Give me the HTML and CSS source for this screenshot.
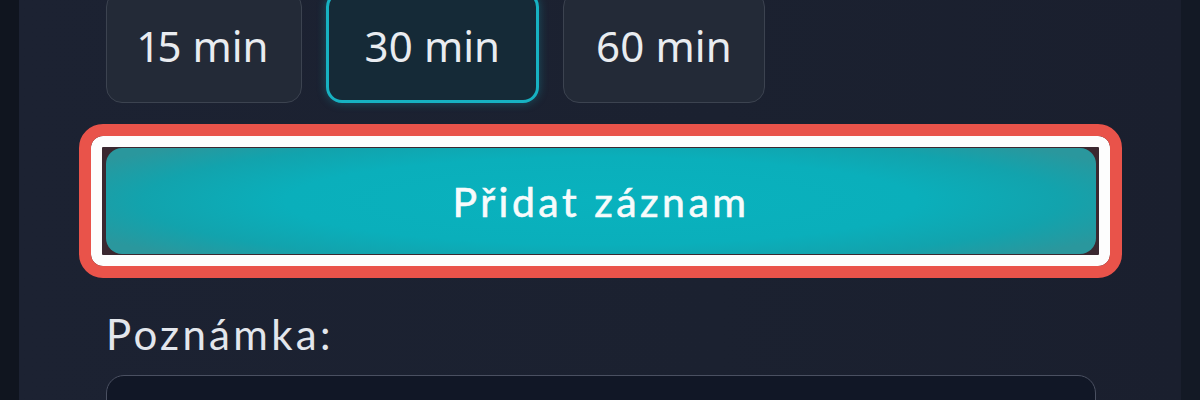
FILE: index.html
```html
<!DOCTYPE html>
<html lang="cs">
<head>
<meta charset="utf-8">
<title>Přidat záznam</title>
<link rel="stylesheet" href="styles.css">
</head>
<body>
<div class="page">
  <div class="edge edge-left"></div>
  <main class="card">
    <div class="durations">
      <button class="dur">15 min</button>
      <button class="dur dur-active">30 min</button>
      <button class="dur">60 min</button>
    </div>
    <div class="highlight">
      <button class="primary">Přidat záznam</button>
    </div>
    <label class="note-label" for="note">Poznámka:</label>
    <textarea id="note" class="note"></textarea>
  </main>
  <div class="edge edge-right"></div>
</div>
</body>
</html>
```

FILE: styles.css
```css
html, body {
  margin: 0;
  padding: 0;
  width: 1200px;
  height: 400px;
  overflow: hidden;
  background: #101520;
}

.page {
  display: flex;
  width: 1200px;
  height: 400px;
  overflow: hidden;
  font-family: "Lato", "Noto Sans", sans-serif;
}

.edge {
  width: 19px;
  flex: none;
}

.edge-left {
  background: #10151f;
}

.edge-right {
  background: #131925;
}

.card {
  flex: 1;
  padding: 0 85px 0 87px;
  background: linear-gradient(90deg, #1c2232 0%, #1b2130 60%, #1a1f2e 100%);
  display: flex;
  flex-direction: column;
  overflow: hidden;
}

.durations {
  display: flex;
  gap: 24px;
  margin-top: -9px;
  flex: none;
}

.dur {
  height: 112px;
  padding: 0 32px 2px;
  border: 1.5px solid #3c4350;
  border-radius: 16px;
  background: #232a37;
  color: #e9ecf0;
  font-family: "Noto Sans", sans-serif;
  font-variant-numeric: proportional-nums;
  font-size: 42px;
  line-height: 1;
}

.dur-active {
  border: 3px solid #17b2c2;
  background: #152a37;
  box-shadow: 0 0 10px rgba(23, 178, 194, 0.35);
  padding: 0 36px 2px;
}

.highlight {
  position: relative;
  margin-top: 45px;
  height: 106px;
  flex: none;
}

.highlight::before {
  content: "";
  position: absolute;
  top: -24px;
  bottom: -24px;
  left: -27px;
  right: -26px;
  border: 12px solid #e9534a;
  border-radius: 24px;
  background: #3b2830;
  box-shadow: inset 0 0 0 11px #fdfdfd;
}

.primary {
  position: relative;
  width: 100%;
  height: 106px;
  border: none;
  border-radius: 16px;
  background: radial-gradient(ellipse 58% 75% at 50% 50%, #09b2be 0%, #0aafbb 55%, #12a3ad 80%, #2a979d 100%);
  color: #f7fbfc;
  font-family: "Lato", sans-serif;
  font-weight: 400;
  -webkit-text-stroke: 0.6px #f7fbfc;
  font-size: 41px;
  letter-spacing: 3.5px;
}

.note-label {
  display: block;
  margin-top: 55px;
  font-size: 42px;
  line-height: 50px;
  letter-spacing: 3.3px;
  color: #e3e6ec;
  flex: none;
}

.note {
  margin-top: 16px;
  height: 120px;
  border: 1.5px solid #4a5061;
  border-radius: 18px;
  background: #111726;
  resize: none;
  flex: none;
}
```
